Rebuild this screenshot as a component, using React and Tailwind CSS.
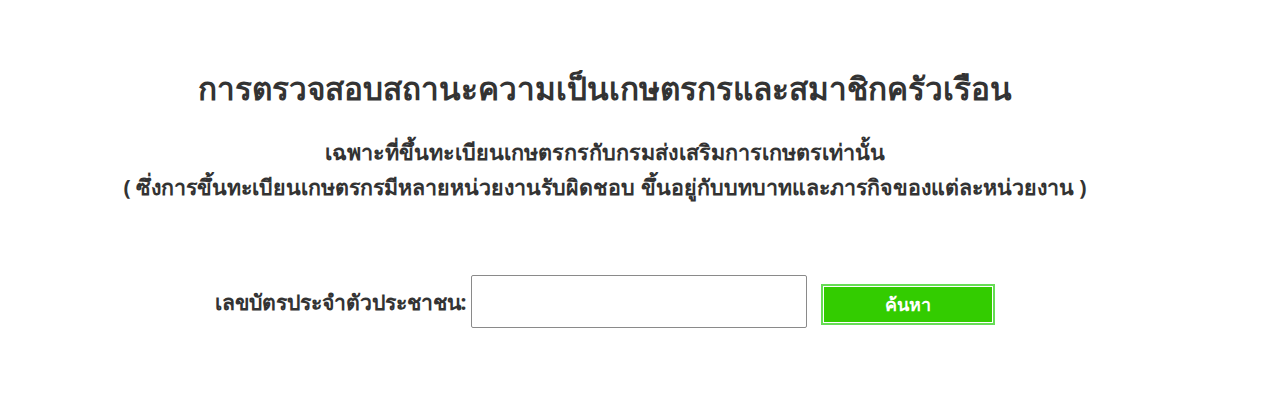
import { useState } from "react";

const App = () => {
  const [pid, setPid] = useState("");

  return (
    <div className="w-full h-[403px] bg-white text-[#333333]" style={{ fontFamily: "Tahoma, 'Noto Sans', sans-serif" }}>
      <div className="w-[1210px] flex flex-col items-center">
        <h1 className="mt-[68px] text-[31.5px] font-bold leading-[40px]">
          การตรวจสอบสถานะความเป็นเกษตรกรและสมาชิกครัวเรือน
        </h1>
        <p className="mt-[26px] text-[21.6px] font-bold leading-[35px]">
          เฉพาะที่ขึ้นทะเบียนเกษตรกรกับกรมส่งเสริมการเกษตรเท่านั้น
        </p>
        <p className="text-[21.4px] font-bold leading-[35px]">
          ( ซึ่งการขึ้นทะเบียนเกษตรกรมีหลายหน่วยงานรับผิดชอบ ขึ้นอยู่กับบทบาทและภารกิจของแต่ละหน่วยงาน )
        </p>
        <div className="mt-[71px] flex flex-row items-start">
          <label className="self-center text-[21.2px] font-bold mr-[5px]">เลขบัตรประจำตัวประชาชน:</label>
          <input
            value={pid}
            onChange={(e) => setPid(e.target.value)}
            className="w-[336px] h-[53px] border border-[#8a8a8a] rounded-[2px] px-2 outline-none"
          />
          <button className="mt-[9px] ml-[14px] w-[174px] h-[41px] bg-[#33cc00] border-2 border-[#66dd55] shadow-[inset_0_0_0_1px_#ffffff] text-white text-[18px] font-bold">
            ค้นหา
          </button>
        </div>
      </div>
    </div>
  );
};

export default App;
